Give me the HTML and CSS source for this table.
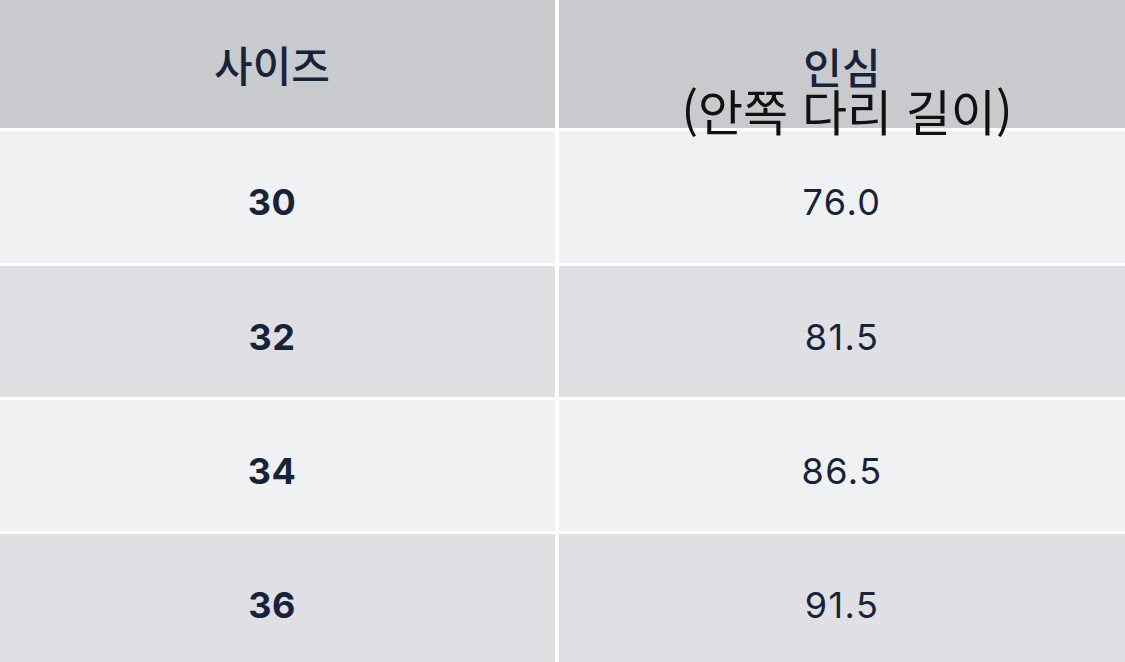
FILE: index.html
```html
<!DOCTYPE html>
<html lang="ko">
<head>
<meta charset="utf-8">
<link rel="stylesheet" href="styles.css">
</head>
<body>
<div class="table">
  <div class="cell head left"><span class="kr">사이즈</span></div>
  <div class="cell head right">
    <span class="kr">인심</span>
    <span class="sub">(안쪽 다리 길이)</span>
  </div>

  <div class="cell odd left"><span class="size">30</span></div>
  <div class="cell odd"><span class="val">76.0</span></div>

  <div class="cell even left"><span class="size">32</span></div>
  <div class="cell even"><span class="val">81.5</span></div>

  <div class="cell odd left"><span class="size">34</span></div>
  <div class="cell odd"><span class="val">86.5</span></div>

  <div class="cell even left"><span class="size">36</span></div>
  <div class="cell even"><span class="val">91.5</span></div>
</div>
</body>
</html>
```
FILE: styles.css
```css
html, body {
  margin: 0;
  padding: 0;
  background: #ffffff;
  overflow: hidden;
}
.table {
  display: grid;
  grid-template-columns: 555px 1fr;
  grid-template-rows: 128px 132px 131px 131px 131px;
  column-gap: 4px;
  row-gap: 3px;
  width: 1125px;
}
.cell {
  display: flex;
  align-items: center;
  justify-content: center;
  color: #16233b;
  font-family: Inter, "Noto Sans CJK KR", sans-serif;
}
.left {
  padding-right: 11px;
}
.head {
  background: #c9cacd;
}
.head.right {
  flex-direction: column;
  justify-content: flex-start;
  padding-top: 44px;
  box-sizing: border-box;
  overflow: visible;
  position: relative;
  z-index: 1;
}
.odd {
  background: #f0f1f3;
}
.even {
  background: #e0e0e4;
}
.kr {
  font-family: "Noto Sans CJK KR", sans-serif;
  font-weight: 500;
  font-size: 42px;
  line-height: 44px;
  color: #16233b;
}
.sub {
  font-family: "Noto Sans CJK KR", sans-serif;
  font-weight: 400;
  font-size: 49px;
  line-height: 44px;
  color: #111111;
  white-space: nowrap;
  margin-left: 10px;
}
.size {
  font-weight: 700;
  font-size: 36px;
  letter-spacing: 0.5px;
  padding-top: 10px;
}
.val {
  font-weight: 400;
  font-size: 36px;
  letter-spacing: 1.5px;
  padding-top: 10px;
}
```
